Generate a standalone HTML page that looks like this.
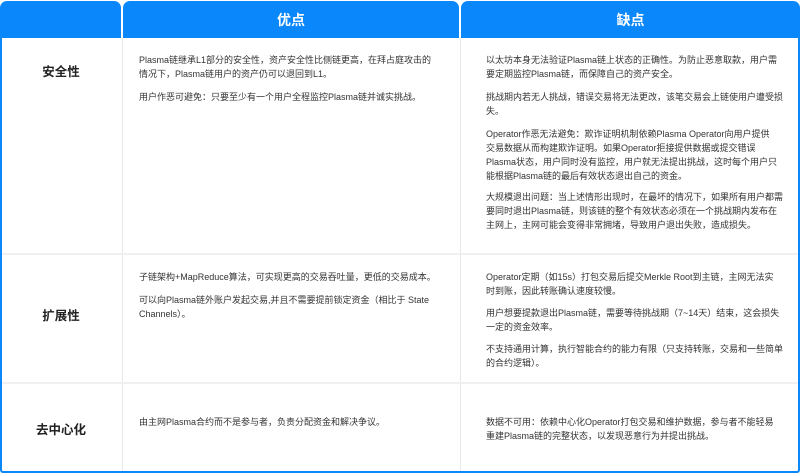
<!DOCTYPE html>
<html><head><meta charset="utf-8"><style>
*{margin:0;padding:0;box-sizing:border-box}
body{width:800px;height:473px;background:#fff;position:relative;overflow:hidden;font-family:"Liberation Sans","Noto Sans CJK SC",sans-serif;color:#333}
.hd{position:absolute;top:1px;height:37px;background:#0a88fb;border-radius:7px 7px 0 0;color:#fff;font-size:14px;font-weight:bold;text-align:center;line-height:38px}
.frame{position:absolute;left:0;top:36px;width:800px;height:437px;border:2px solid #0a88fb;border-top:none;border-radius:0 0 3px 3px}
.vl{position:absolute;top:38px;width:1px;height:433px;background:#e8e8e8}
.hl{position:absolute;left:2px;width:796px;height:2px;background:#eef0f2}
.lab{position:absolute;left:0;width:122px;text-align:center;font-size:12.5px;font-weight:bold;color:#222}
.p{position:absolute;font-size:9px;line-height:14px;color:#333;white-space:nowrap}
</style></head><body>
<div class="hd" style="left:0;width:121px"></div>
<div class="hd" style="left:123px;width:336px">优点</div>
<div class="hd" style="left:461px;width:339px">缺点</div>
<div class="frame"></div>
<div class="vl" style="left:122px"></div>
<div class="vl" style="left:460px"></div>
<div class="hl" style="top:253px"></div>
<div class="hl" style="top:382px"></div>

<div class="lab" style="top:61px">安全性</div>
<div class="lab" style="top:305px">扩展性</div>
<div class="lab" style="top:419px">去中心化</div>

<div class="p" style="left:139px;top:53px">Plasma链继承L1部分的安全性，资产安全性比侧链更高，在拜占庭攻击的<br>情况下，Plasma链用户的资产仍可以退回到L1。</div>
<div class="p" style="left:139px;top:90px">用户作恶可避免：只要至少有一个用户全程监控Plasma链并诚实挑战。</div>

<div class="p" style="left:486px;top:53px">以太坊本身无法验证Plasma链上状态的正确性。为防止恶意取款，用户需<br>要定期监控Plasma链，而保障自己的资产安全。</div>
<div class="p" style="left:486px;top:90px">挑战期内若无人挑战，错误交易将无法更改，该笔交易会上链使用户遭受损<br>失。</div>
<div class="p" style="left:486px;top:127px">Operator作恶无法避免：欺诈证明机制依赖Plasma Operator向用户提供<br>交易数据从而构建欺诈证明。如果Operator拒接提供数据或提交错误<br>Plasma状态，用户同时没有监控，用户就无法提出挑战，这时每个用户只<br>能根据Plasma链的最后有效状态退出自己的资金。</div>
<div class="p" style="left:486px;top:190px">大规模退出问题：当上述情形出现时，在最坏的情况下，如果所有用户都需<br>要同时退出Plasma链，则该链的整个有效状态必须在一个挑战期内发布在<br>主网上，主网可能会变得非常拥堵，导致用户退出失败，造成损失。</div>

<div class="p" style="left:139px;top:270px">子链架构+MapReduce算法，可实现更高的交易吞吐量，更低的交易成本。</div>
<div class="p" style="left:139px;top:293px">可以向Plasma链外账户发起交易,并且不需要提前锁定资金（相比于 State<br>Channels）。</div>

<div class="p" style="left:486px;top:270px">Operator定期（如15s）打包交易后提交Merkle Root到主链，主网无法实<br>时到账，因此转账确认速度较慢。</div>
<div class="p" style="left:486px;top:306px">用户想要提款退出Plasma链，需要等待挑战期（7~14天）结束，这会损失<br>一定的资金效率。</div>
<div class="p" style="left:486px;top:342px">不支持通用计算，执行智能合约的能力有限（只支持转账，交易和一些简单<br>的合约逻辑）。</div>

<div class="p" style="left:139px;top:415px">由主网Plasma合约而不是参与者，负责分配资金和解决争议。</div>
<div class="p" style="left:486px;top:415px">数据不可用：依赖中心化Operator打包交易和维护数据，参与者不能轻易<br>重建Plasma链的完整状态，以发现恶意行为并提出挑战。</div>
</body></html>
